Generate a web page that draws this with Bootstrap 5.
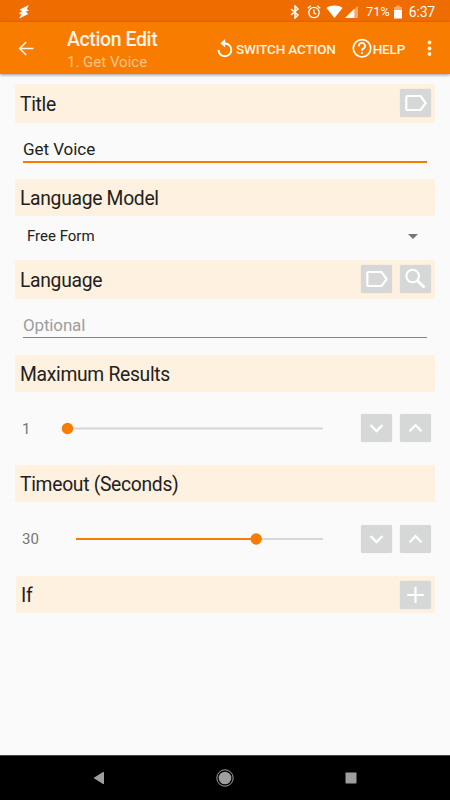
<!DOCTYPE html>
<html lang="en">
<head>
<meta charset="utf-8">
<meta name="viewport" content="width=device-width, initial-scale=1">
<title>Action Edit</title>
<link href="https://cdn.jsdelivr.net/npm/bootstrap@5.3.0/dist/css/bootstrap.min.css" rel="stylesheet">
<style>
body{font-family:Roboto,"Liberation Sans",sans-serif;background:#fafafa;color:#212121;width:450px;height:800px;overflow:hidden}
svg{display:block;flex:none}
.status{height:22px;background:#ef6c00;color:#fff;font-size:13px;line-height:22px;padding:1px 15px 0 18px}
.pct{margin-left:8px;letter-spacing:-.1px}
.clock{font-size:14px;margin-left:7px;letter-spacing:-.2px}
.appbar{height:52px;background:#f77c00;color:#fff3e4;padding:0 14px 0 18px;box-shadow:0 1px 3px rgba(0,0,0,.4);z-index:1;position:relative}
.heading{width:150px;margin-left:33px;padding-top:5px}
.heading h1{font-size:19.5px;line-height:22px;font-weight:500;letter-spacing:-.4px}
.subtitle{font-size:15px;line-height:22px;color:#ffc58a}
.act{font-size:13.5px;font-weight:500;line-height:20px;color:#fff3e4;white-space:nowrap}
.act span{padding-top:1px;letter-spacing:-.17px}
.switch{margin-left:3px}
.help{margin-left:16px}
.help span{margin-left:1px}
.main{padding:10px 15px 0}
.sect{background:#fff1df;height:37px;padding:0 4px 0 5px}
.sect h2{font-size:19.3px;line-height:24px;font-weight:400;letter-spacing:-.3px;padding-top:3px}
.tall{height:39px}
.tall .sq{margin-bottom:1px}
.sq{width:31px;height:28px;flex:none;background:#d6d8d7;border-radius:2px;color:#fff;box-shadow:0 0 1px rgba(0,0,0,.18)}
.pair{gap:8px}
.field{margin:0 8px;font-size:17px;line-height:24px;letter-spacing:-.05px}
.field-title{height:40px;padding-top:14px;border-bottom:2px solid #f57c00;margin-bottom:16px}
.field-lang{height:39px;padding-top:14px;border-bottom:1px solid #858585;margin-bottom:17px;color:#9e9e9e;letter-spacing:-.15px}
.choice{height:44px;padding:0 17px 3px 12px;font-size:15px}
.seek{height:73px;padding:0 4px 1px 7px;color:#757575;font-size:15px}
.seek-b{height:74px}
.num{width:39px;padding-top:2px}
.slide{width:262px}
.last{margin-left:1px}
.navbar-sys{height:45px;background:#000;border-top:1px solid #444;padding:0 93px 1px 93px}
</style>
</head>
<body class="d-flex flex-column">
<div class="status d-flex align-items-center">
  <svg width="12" height="14" viewBox="0 0 12 14"><path fill="#fff" d="M10.800 0L1.800 4.500L4 7L.8 8L3.200 9.500L1.200 13.500L10.200 9L7.800 6.500L11 5.500L8.800 4Z"/></svg>
  <svg class="ms-auto" width="10" height="14" viewBox="0 0 10 14"><path fill="none" stroke="#fff" stroke-width="1.500" d="M1 4L8 10L5 13V1L8 4L1 10"/></svg>
  <svg width="14" height="14" viewBox="0 0 14 14" style="margin-left:7px"><g fill="none" stroke="#fff" stroke-width="1.300"><circle cx="7" cy="7.500" r="5.200"/><path d="M.8 3.200L3.800.8M13.200 3.200L10.200.8M7 4.500V8L9.300 9.300"/></g></svg>
  <svg width="17" height="14" viewBox="0 0 16 14" style="margin-left:5px"><path fill="#fff" d="M0 3C4.500-.2 11.500-.2 16 3L8 13Z"/></svg>
  <svg width="13" height="14" viewBox="0 0 13 14" style="margin-left:2px"><path fill="#f6a868" d="M9 4.500L13 .7V13H9Z"/><path fill="#fff" d="M0 13L9.300 3.800V13Z"/></svg>
  <span class="pct">71%</span>
  <svg width="8" height="14" viewBox="0 0 8 14" style="margin-left:4px"><path fill="#f6a868" d="M0 2H2.300V.5H5.700V2H8V6H0Z"/><path fill="#fff" d="M0 5H8V13.500H0Z"/></svg>
  <span class="clock">6:37</span>
</div>
<header class="appbar d-flex align-items-center">
  <svg width="16" height="16" viewBox="0 0 16 16"><path fill="none" stroke="#fff3e4" stroke-width="1.700" d="M15.500 8.500H2M8.200 2L1.700 8.500L8.200 15"/></svg>
  <div class="heading"><h1 class="m-0">Action Edit</h1><div class="subtitle">1. Get Voice</div></div>
  <a class="act d-flex align-items-center text-decoration-none" href="#">
    <svg width="16" height="20" viewBox="0 0 16 20"><path fill="none" stroke="#fff" stroke-width="1.900" d="M7 5.500H8A6.400 6.400 0 1 1 1.500 12"/><path fill="#fff" d="M8.200 1V9.600L3.400 5.300Z"/></svg>
    <span class="switch">SWITCH ACTION</span></a>
  <a class="act d-flex align-items-center text-decoration-none help" href="#">
    <svg width="20" height="20" viewBox="0 0 20 20"><circle cx="10" cy="10.300" r="8.700" fill="none" stroke="#fff" stroke-width="1.700"/><path fill="none" stroke="#fff" stroke-width="1.800" d="M7 8.300A3 3 0 1 1 11.600 10.400Q10 11.300 10 12.700M10 14.100V15.900"/></svg>
    <span>HELP</span></a>
  <svg class="ms-auto" width="5" height="16" viewBox="0 0 5 16" style="margin-right:4px"><g fill="#fff3e4"><circle cx="2.500" cy="2.500" r="1.900"/><circle cx="2.500" cy="8.500" r="1.900"/><circle cx="2.500" cy="14" r="1.900"/></g></svg>
</header>
<svg class="d-none"><defs>
  <symbol id="tag" viewBox="0 0 31 28"><path fill="none" stroke="#fff" stroke-width="2.200" stroke-linejoin="round" d="M7.500 7H20.500L25.700 14.200L20.500 21H7.500Q6.300 21 6.300 19.500V8.500Q6.300 7 7.500 7Z"/></symbol>
  <symbol id="find" viewBox="0 0 31 28"><g fill="none" stroke="#fff"><circle cx="12.700" cy="11" r="6.300" stroke-width="2.100"/><path stroke-width="2.800" d="M17.500 15.800L24.500 22.500"/></g></symbol>
  <symbol id="down" viewBox="0 0 31 28"><path fill="none" stroke="#fff" stroke-width="2.300" d="M9.500 11L15.500 17L21.500 11"/></symbol>
  <symbol id="up" viewBox="0 0 31 28"><path fill="none" stroke="#fff" stroke-width="2.300" d="M9.500 17.200L15.500 11.200L21.500 17.200"/></symbol>
  <symbol id="plus" viewBox="0 0 31 28"><path fill="none" stroke="#fff" stroke-width="2.200" d="M7.200 14H23.800M15.500 5.800V22"/></symbol>
</defs></svg>
<main class="main flex-grow-1">
  <div class="sect tall d-flex align-items-center justify-content-between"><h2 class="m-0">Title</h2><svg class="sq"><use href="#tag"/></svg></div>
  <div class="field field-title">Get Voice</div>
  <div class="sect d-flex align-items-center"><h2 class="m-0">Language Model</h2></div>
  <div class="choice d-flex align-items-center justify-content-between"><span>Free Form</span><svg width="10" height="5" viewBox="0 0 10 5"><path fill="#757575" d="M0 0H10L5 5Z"/></svg></div>
  <div class="sect tall d-flex align-items-center"><h2 class="m-0 me-auto">Language</h2><div class="pair d-flex"><svg class="sq"><use href="#tag"/></svg><svg class="sq"><use href="#find"/></svg></div></div>
  <div class="field field-lang">Optional</div>
  <div class="sect d-flex align-items-center"><h2 class="m-0">Maximum Results</h2></div>
  <div class="seek d-flex align-items-center"><span class="num">1</span>
    <svg class="slide" height="14" viewBox="0 0 262 14"><path stroke="#d6d6d6" stroke-width="2" d="M7 7.500H262"/><circle cx="6.500" cy="7.500" r="5.700" fill="#f77c00"/></svg>
    <div class="pair d-flex ms-auto"><svg class="sq"><use href="#down"/></svg><svg class="sq"><use href="#up"/></svg></div></div>
  <div class="sect d-flex align-items-center"><h2 class="m-0">Timeout (Seconds)</h2></div>
  <div class="seek seek-b d-flex align-items-center"><span class="num">30</span>
    <svg class="slide" height="14" viewBox="0 0 262 14"><path stroke="#d6d6d6" stroke-width="2" d="M195 7H262"/><path stroke="#f77c00" stroke-width="2" d="M15 7H195"/><circle cx="195.200" cy="7" r="5.700" fill="#f77c00"/></svg>
    <div class="pair d-flex ms-auto"><svg class="sq"><use href="#down"/></svg><svg class="sq"><use href="#up"/></svg></div></div>
  <div class="sect last d-flex align-items-center justify-content-between"><h2 class="m-0">If</h2><svg class="sq"><use href="#plus"/></svg></div>
</main>
<footer class="navbar-sys d-flex align-items-center justify-content-between">
  <svg width="12" height="14" viewBox="0 0 12 14"><path fill="#9e9e9e" d="M.5 7L10 1Q11 .6 11 1.500V12.500Q11 13.400 10 13Z"/></svg>
  <svg width="18" height="18" viewBox="0 0 18 18"><circle cx="9" cy="9" r="6.300" fill="#9e9e9e"/><circle cx="9" cy="9" r="8.200" fill="none" stroke="#9e9e9e"/></svg>
  <svg width="12" height="12" viewBox="0 0 12 12"><rect x=".5" y=".5" width="11" height="11" rx=".8" fill="#9e9e9e"/></svg>
</footer>
<script src="https://cdn.jsdelivr.net/npm/bootstrap@5.3.0/dist/js/bootstrap.bundle.min.js"></script>
</body>
</html>
